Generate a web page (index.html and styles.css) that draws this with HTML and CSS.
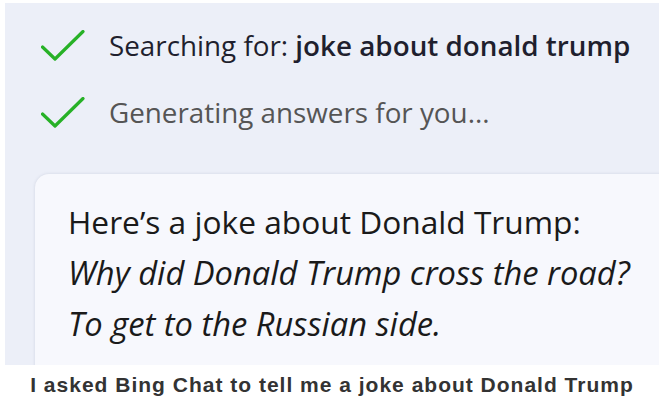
FILE: index.html
```html
<!DOCTYPE html>
<html>
<head>
<meta charset="utf-8">
<link rel="stylesheet" href="styles.css">
</head>
<body>
<div class="shot">
  <div class="steps">
    <div class="step">
      <svg class="check" viewBox="0 0 44 32" width="44" height="32"><path d="M1.5 17 L14 29 L42 1.5" fill="none" stroke="#27b127" stroke-width="3.2" stroke-linecap="round" stroke-linejoin="round"/></svg>
      <span class="step-text dark">Searching for: <b>joke about donald trump</b></span>
    </div>
    <div class="step">
      <svg class="check" viewBox="0 0 44 32" width="44" height="32"><path d="M1.5 17 L14 29 L42 1.5" fill="none" stroke="#27b127" stroke-width="3.2" stroke-linecap="round" stroke-linejoin="round"/></svg>
      <span class="step-text gray">Generating answers for you...</span>
    </div>
  </div>
  <div class="card">
    <p class="line">Here’s a joke about Donald Trump:</p>
    <p class="line joke">Why did Donald Trump cross the road?</p>
    <p class="line joke">To get to the Russian side.</p>
  </div>
</div>
<p class="caption">I asked Bing Chat to tell me a joke about Donald Trump</p>
</body>
</html>
```
FILE: styles.css
```css
html, body {
  margin: 0;
  padding: 0;
  background: #ffffff;
}
body {
  width: 664px;
  height: 406px;
  overflow: hidden;
}
.shot {
  margin: 3px 5px 0 5px;
  height: 362px;
  background: #eceff8;
  overflow: hidden;
  font-family: "Open Sans", "Noto Sans", sans-serif;
}
.steps {
  display: flex;
  flex-direction: column;
  gap: 35px;
  padding: 27px 0 0 36px;
}
.step {
  display: flex;
  align-items: center;
  gap: 24px;
  height: 32px;
}
.check {
  flex: none;
}
.step-text {
  font-size: 27.8px;
  white-space: nowrap;
  margin-top: -3px;
}
.step-text b {
  font-weight: 600;
}
.dark { color: #1f1f2e; }
.gray { color: #555555; }
.card {
  margin: 45px -40px 0 30px;
  height: 200px;
  background: #f7f8fd;
  border-radius: 14px 14px 0 0;
  box-shadow: 0 0 3px rgba(120, 130, 160, 0.25);
  padding: 22px 0 0 33px;
}
.line {
  margin: 0;
  font-size: 31.7px;
  line-height: 51px;
  color: #1a1a1a;
  white-space: nowrap;
}
.joke {
  font-style: italic;
  font-size: 32.7px;
}
.caption {
  margin: 8px 0 0 0;
  text-align: center;
  font-family: "Liberation Sans", Arial, sans-serif;
  font-weight: bold;
  font-size: 21px;
  letter-spacing: 1px;
  color: #333333;
}
```
